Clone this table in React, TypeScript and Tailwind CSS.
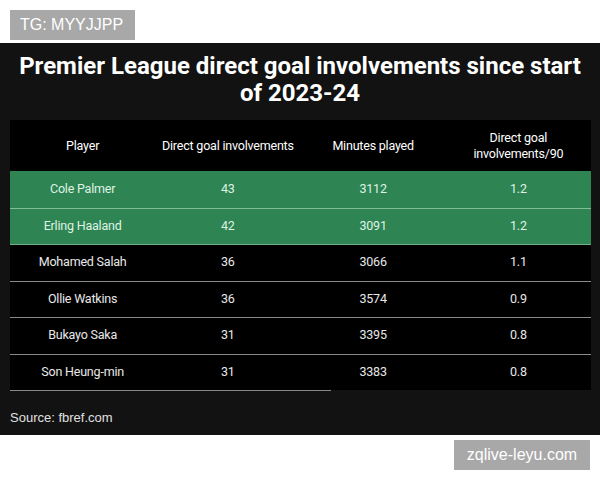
import React from "react";

const rows = [
  { p: "Cole Palmer", g: "43", m: "3112", r: "1.2", hi: true },
  { p: "Erling Haaland", g: "42", m: "3091", r: "1.2", hi: true },
  { p: "Mohamed Salah", g: "36", m: "3066", r: "1.1", hi: false },
  { p: "Ollie Watkins", g: "36", m: "3574", r: "0.9", hi: false },
  { p: "Bukayo Saka", g: "31", m: "3395", r: "0.8", hi: false },
  { p: "Son Heung-min", g: "31", m: "3383", r: "0.8", hi: false },
];

export default function App() {
  return (
    <div className="relative w-[600px] h-[480px] bg-white overflow-hidden" style={{ fontFamily: "Roboto, 'Liberation Sans', sans-serif" }}>
      <div className="h-[43px]" />
      <div className="bg-[#121212] h-[392px] flex flex-col px-[10px]">
        <h1 className="mt-[10px] text-center text-white font-bold text-[24px] leading-[27px] tracking-[0px]">
          Premier League direct goal involvements since start
          <br />
          of 2023-24
        </h1>
        <div className="mt-[13px] bg-black w-[581px]">
          <div className="grid grid-cols-4 h-[51px] items-center text-white text-[12.5px] leading-[16px] text-center tracking-[-0.2px]">
            <div>Player</div>
            <div>Direct goal involvements</div>
            <div>Minutes played</div>
            <div>Direct goal<br />involvements/90</div>
          </div>
          {rows.map((r, i) => (
            <div
              key={i}
              className={
                r.hi
                  ? "grid grid-cols-4 h-[36.5px] items-center text-center text-[12.5px] tracking-[-0.2px] text-[#dff3e3] bg-[#2e8453] border-t border-[#7fbf95]"
                  : "grid grid-cols-4 h-[36.5px] items-center text-center text-[12.5px] tracking-[-0.2px] text-[#e8e8e8] bg-black border-t border-[#8a8a8a]"
              }
              style={i === 0 ? { borderTopColor: "#2e8453" } : i === 2 ? { borderTopColor: "#6fae86" } : undefined}
            >
              <div>{r.p}</div>
              <div>{r.g}</div>
              <div>{r.m}</div>
              <div>{r.r}</div>
            </div>
          ))}
        </div>
        <div className="h-px w-[321px] bg-[#8a8a8a]" />
        <div className="mt-[17px] text-[13px] text-[#e0e0e0]" style={{ fontFamily: "'Liberation Sans', Arial, sans-serif" }}>Source: fbref.com</div>
      </div>
      <div className="absolute left-[10px] top-[10px] w-[125px] h-[30px] bg-[#a8a8a8] text-white text-[16px] leading-[30px] pl-[10px]" style={{ fontFamily: "'Liberation Sans', Arial, sans-serif" }}>
        TG: MYYJJPP
      </div>
      <div className="absolute left-[454px] top-[440px] w-[136px] h-[30px] bg-[#a8a8a8] text-white text-[16px] leading-[30px] text-center" style={{ fontFamily: "'Liberation Sans', Arial, sans-serif" }}>
        zqlive-leyu.com
      </div>
    </div>
  );
}
